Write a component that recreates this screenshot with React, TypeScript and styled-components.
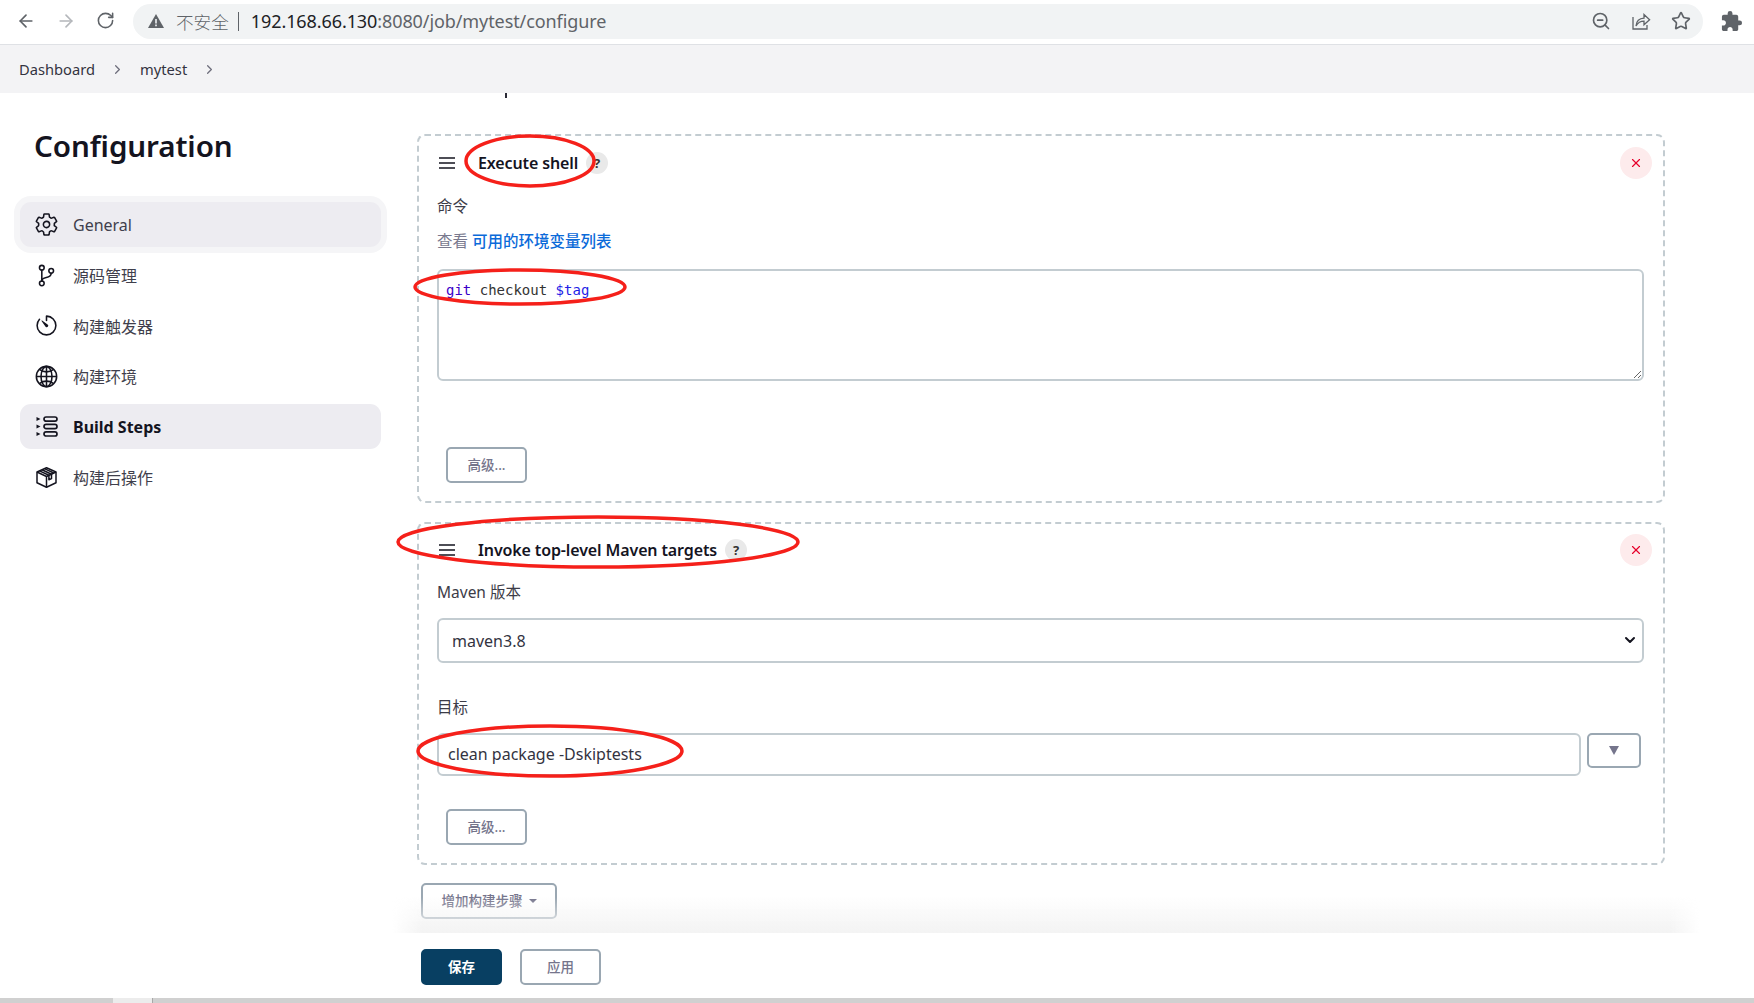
import styled, { createGlobalStyle } from "styled-components"
import { ArrowLeft, ArrowRight, RotateCw, ZoomOut, Star, ChevronRight, ChevronDown, X } from "lucide-react"
import { MdExtension } from "react-icons/md"
import { IoSettingsOutline, IoGitBranchOutline, IoTimerOutline, IoGlobeOutline } from "react-icons/io5"

const INK = "#14141f"
const FIELD_BORDER = "#c3ccd1"
const BUTTON_BORDER = "#9aa7b2"
const BUTTON_TEXT = "#75758c"

const GlobalStyle = createGlobalStyle`
	html, body {
		margin: 0;
		height: 100%;
		overflow: hidden;
		background: #fff;
	}
	body, button, input, select {
		font-family: "Noto Sans", "Noto Sans CJK SC", sans-serif;
	}
	* {
		box-sizing: border-box;
	}
`

const Page = styled.div`
	position: relative;
	display: flex;
	flex-direction: column;
	width: 1754px;
	height: 1003px;
	overflow: hidden;
	color: ${INK};
`

const BrowserBar = styled.div`
	display: flex;
	align-items: center;
	flex: none;
	height: 45px;
	padding: 0 14px 2px 16px;
	border-bottom: 1px solid #dfe1e5;
	color: #5f6368;
`

const NavIcons = styled.div`
	display: flex;
	gap: 20px;
`

const NavIcon = styled.span<{ $dim?: boolean }>`
	display: flex;
	width: 20px;
	height: 20px;
	color: ${(p) => (p.$dim ? "#b4b7bb" : "#5f6368")};
`

const AddressPill = styled.div`
	display: flex;
	align-items: center;
	flex: none;
	width: 1570px;
	height: 35px;
	margin-left: 17px;
	padding: 0 12px 0 14px;
	border-radius: 18px;
	background: #f1f3f4;
`

const InsecureLabel = styled.span`
	margin-left: 11px;
	font-size: 17.6px;
	color: #5f6368;
	font-family: "Noto Sans CJK SC", sans-serif;
	font-weight: 300;
`

const Divider = styled.span`
	width: 1px;
	height: 19px;
	margin: 0 12px 0 9px;
	background: #5f6368;
`

const Url = styled.span`
	flex: 1;
	font-size: 18px;
	letter-spacing: -0.09px;
	color: #5f6368;
	span {
		color: #202124;
	}
`

const PillIcons = styled.div`
	display: flex;
	gap: 20px;
`

const Extensions = styled.span`
	display: flex;
	margin-left: 17px;
	color: #5f6368;
`

const Breadcrumbs = styled.nav`
	display: flex;
	align-items: center;
	flex: none;
	height: 48px;
	padding-left: 19px;
	font-size: 14.7px;
	background: #f3f3f5;
	color: #33333f;
`

const Crumb = styled.span`
	display: flex;
	align-items: center;
	margin-right: 15px;
	svg {
		margin-left: 15px;
		color: #6e6e7c;
	}
`

const Workspace = styled.div`
	position: relative;
	display: flex;
	flex: 1;
	min-height: 0;
	&::after {
		content: "";
		position: absolute;
		left: 392px;
		right: 54px;
		bottom: 0;
		height: 36px;
		background: linear-gradient(transparent, #f3f3f3);
		-webkit-mask-image: linear-gradient(90deg, transparent, #000 30px, #000 calc(100% - 30px), transparent);
		pointer-events: none;
	}
`

const Sidebar = styled.aside`
	flex: none;
	width: 417px;
	padding: 31px 36px 0 20px;
`

const SidebarTitle = styled.h1`
	margin: 0 0 34px 14px;
	font-size: 29.6px;
	line-height: 44px;
	font-weight: 600;
	letter-spacing: -0.1px;
`

const SideMenu = styled.div`
	display: flex;
	flex-direction: column;
	gap: 5.6px;
`

const SideItem = styled.div<{ $active?: boolean; $focus?: boolean; $bold?: boolean }>`
	display: flex;
	align-items: center;
	gap: 14px;
	height: 45px;
	padding-left: 14px;
	border-radius: 11px;
	font-size: 16px;
	font-weight: ${(p) => (p.$bold ? 700 : 400)};
	color: ${(p) => (p.$bold ? INK : "#3f3f4c")};
	background: ${(p) => (p.$active ? "#edecf1" : "transparent")};
	box-shadow: ${(p) => (p.$focus ? "0 0 0 6px #f5f5f7" : "none")};
	svg {
		flex: none;
		width: 25px;
		height: 25px;
		color: ${INK};
	}
`

const Main = styled.main`
	flex: none;
	width: 1248px;
`

const HeadingStem = styled.div`
	width: 2px;
	height: 5px;
	margin: 0 0 36px 88px;
	background: #2a2a36;
`

const StepList = styled.div`
	display: flex;
	flex-direction: column;
	gap: 19px;
`

const StepCard = styled.section<{ $top: number }>`
	padding: ${(p) => p.$top}px 19px 18px 18px;
	border: 2px dashed ${FIELD_BORDER};
	border-radius: 8px;
`

const StepHeader = styled.div`
	display: flex;
	align-items: center;
	height: 30px;
`

const DragHandle = styled.svg`
	flex: none;
	width: 16px;
	height: 12px;
	margin: 0 23px 0 2px;
	color: ${INK};
`

const StepTitle = styled.h2`
	margin: 0;
	font-size: 16px;
	font-weight: 600;
	letter-spacing: -0.12px;
`

const HelpBadge = styled.span`
	display: flex;
	align-items: center;
	justify-content: center;
	width: 22px;
	height: 22px;
	margin-left: 8px;
	border-radius: 50%;
	font-size: 13px;
	font-weight: 700;
	background: #e9e9e9;
	color: #333;
`

const RemoveButton = styled.span`
	display: flex;
	align-items: center;
	justify-content: center;
	width: 32px;
	height: 32px;
	margin: 0 -8px 0 auto;
	border-radius: 50%;
	background: #fdebec;
	color: #e6002b;
`

const FieldLabel = styled.div<{ $top: number }>`
	margin-top: ${(p) => p.$top}px;
	font-size: 15.5px;
	line-height: 22px;
	color: #3c3c48;
`

const HintLine = styled.div`
	margin-top: 13px;
	font-size: 15.5px;
	line-height: 22px;
	color: #7a7a8f;
	a {
		color: #0b6ad9;
		font-weight: 500;
		text-decoration: none;
	}
`

const CodeArea = styled.div`
	height: 112px;
	margin-top: 17px;
	padding: 9px 7px;
	border: 2px solid ${FIELD_BORDER};
	border-radius: 6px;
	overflow: auto;
	resize: vertical;
	font-family: "DejaVu Sans Mono", monospace;
	font-size: 14px;
	line-height: 20px;
	color: #333;
`

const CodeWord = styled.span<{ $tone: string }>`
	color: ${(p) => p.$tone};
`

const PlainButton = styled.button<{ $width?: number; $height?: number }>`
	display: flex;
	align-items: center;
	justify-content: center;
	flex: none;
	width: ${(p) => p.$width ?? 81}px;
	height: ${(p) => p.$height ?? 36}px;
	padding: 0 0 2px;
	border: 2px solid ${BUTTON_BORDER};
	border-radius: 5px;
	background: #fff;
	font-size: 13.5px;
	font-weight: 500;
	color: ${BUTTON_TEXT};
`

const AdvancedButton = styled(PlainButton)<{ $top: number }>`
	margin: ${(p) => p.$top}px 0 0 9px;
`

const SelectWrap = styled.div`
	position: relative;
	margin-top: 15px;
	svg {
		position: absolute;
		top: 14px;
		right: 6px;
		color: ${INK};
		pointer-events: none;
	}
`

const VersionSelect = styled.select`
	display: block;
	width: 100%;
	height: 45px;
	padding-left: 13px;
	border: 2px solid ${FIELD_BORDER};
	border-radius: 6px;
	background: #fff;
	font-size: 16px;
	color: #33333f;
	outline: none;
	appearance: none;
`

const GoalRow = styled.div`
	display: flex;
	align-items: flex-start;
	gap: 6px;
	margin-top: 15px;
`

const GoalInput = styled.input`
	width: 1144px;
	height: 43px;
	padding: 0 9px 2px;
	border: 2px solid ${FIELD_BORDER};
	border-radius: 6px;
	font-size: 16px;
	color: #33333f;
	outline: none;
`

const Caret = styled.span<{ $half: number; $tall: number }>`
	width: 0;
	height: 0;
	margin-top: 2px;
	border-left: ${(p) => p.$half}px solid transparent;
	border-right: ${(p) => p.$half}px solid transparent;
	border-top: ${(p) => p.$tall}px solid ${BUTTON_TEXT};
`

const AddStepButton = styled(PlainButton)`
	gap: 6px;
	margin: 18px 0 0 4px;
`

const FooterBar = styled.footer`
	display: flex;
	gap: 18px;
	flex: none;
	height: 65px;
	padding: 16px 0 0 421px;
	background: #fff;
`

const SaveButton = styled(PlainButton)`
	border-color: #083f62;
	background: #083f62;
	color: #fff;
	font-weight: 700;
`

const ScrollTrack = styled.div`
	display: flex;
	flex: none;
	height: 5px;
	padding-left: 113px;
	background: #d0d0d0;
`

const ScrollThumb = styled.div`
	width: 40px;
	background: #ececec;
	border-right: 1px solid #a8a8a8;
`

const Annotations = styled.svg`
	position: absolute;
	inset: 0;
	width: 1754px;
	height: 1003px;
	pointer-events: none;
`

const WarningIcon = () => (
	<svg width='18' height='18' viewBox='0 0 18 18'>
		<path d='M9 2 17 16H1Z' fill='#5f6368' />
		<path d='M8.2 7h1.6v4.6H8.2ZM8.2 12.6h1.6v1.6H8.2Z' fill='#f1f3f4' />
	</svg>
)

const ShareIcon = () => (
	<svg width='20' height='20' viewBox='0 0 20 20' fill='none' stroke='#5f6368' strokeWidth='1.3'>
		<path d='M2 6v12h14v-4' />
		<path d='M5 15c.4-4.6 3.4-7.6 8-7.8V3.6l5.6 5.2-5.6 5v-3.6c-3.4 0-6 1.400-8 4.800Z' />
	</svg>
)

const BuildStepsIcon = () => (
	<svg viewBox='-1.500 -1.500 25 25' fill='none' stroke='currentColor' strokeWidth='1.700'>
		<rect x='8.500' y='1.500' width='13' height='4.200' rx='2.100' />
		<rect x='8.500' y='8.900' width='13' height='4.200' rx='2.100' />
		<rect x='8.500' y='16.300' width='13' height='4.200' rx='2.100' />
		<path d='M1 1.600 5 3.600 1 5.600ZM1 9 5 11 1 13ZM1 16.400 5 18.400 1 20.400Z' fill='currentColor' stroke='none' />
	</svg>
)

const PackageIcon = () => (
	<svg viewBox='-1.500 -1.500 25 25' fill='none' stroke='currentColor' strokeWidth='1.500' strokeLinejoin='round'>
		<path d='M11 1.200 20.500 5.500v10.800L11 20.800 1.500 16.300V5.500Z' />
		<path d='M1.500 5.500 11 10l9.500-4.500M11 10v10.800' />
		<path d='M6.500 3.200 16 7.700v4.400l-2.600 1.200V8.800L4 4.400' />
		<path d='M9 2.100 18.200 6.500' />
	</svg>
)

const HandleIcon = () => (
	<DragHandle viewBox='0 0 16 12' fill='none' stroke='currentColor' strokeWidth='1.700'>
		<path d='M0 1h16M0 6h16M0 11h16' />
	</DragHandle>
)

const menu = [
	{ label: "General", icon: <IoSettingsOutline />, active: true, focus: true },
	{ label: "源码管理", icon: <IoGitBranchOutline /> },
	{ label: "构建触发器", icon: <IoTimerOutline /> },
	{ label: "构建环境", icon: <IoGlobeOutline /> },
	{ label: "Build Steps", icon: <BuildStepsIcon />, active: true, bold: true },
	{ label: "构建后操作", icon: <PackageIcon /> },
]

const App = () => {
	return (
		<Page>
			<GlobalStyle />
			<BrowserBar>
				<NavIcons>
					<NavIcon>
						<ArrowLeft size={20} />
					</NavIcon>
					<NavIcon $dim>
						<ArrowRight size={20} />
					</NavIcon>
					<NavIcon>
						<RotateCw size={19} />
					</NavIcon>
				</NavIcons>
				<AddressPill>
					<WarningIcon />
					<InsecureLabel>不安全</InsecureLabel>
					<Divider />
					<Url>
						<span>192.168.66.130</span>:8080/job/mytest/configure
					</Url>
					<PillIcons>
						<NavIcon>
							<ZoomOut size={20} />
						</NavIcon>
						<NavIcon>
							<ShareIcon />
						</NavIcon>
						<NavIcon>
							<Star size={20} />
						</NavIcon>
					</PillIcons>
				</AddressPill>
				<Extensions>
					<MdExtension size={23} />
				</Extensions>
			</BrowserBar>
			<Breadcrumbs>
				<Crumb>
					Dashboard
					<ChevronRight size={15} />
				</Crumb>
				<Crumb>
					mytest
					<ChevronRight size={15} />
				</Crumb>
			</Breadcrumbs>
			<Workspace>
				<Sidebar>
					<SidebarTitle>Configuration</SidebarTitle>
					<SideMenu>
						{menu.map((m) => (
							<SideItem key={m.label} $active={m.active} $focus={m.focus} $bold={m.bold}>
								{m.icon}
								{m.label}
							</SideItem>
						))}
					</SideMenu>
				</Sidebar>
				<Main>
					<HeadingStem />
					<StepList>
						<StepCard $top={12}>
							<StepHeader>
								<HandleIcon />
								<StepTitle>Execute shell</StepTitle>
								<HelpBadge>?</HelpBadge>
								<RemoveButton>
									<X size={14} />
								</RemoveButton>
							</StepHeader>
							<FieldLabel $top={17}>命令</FieldLabel>
							<HintLine>
								查看 <a href='#'>可用的环境变量列表</a>
							</HintLine>
							<CodeArea>
								<CodeWord $tone='#3a00c8'>git</CodeWord> checkout <CodeWord $tone='#1f1fe6'>$tag</CodeWord>
							</CodeArea>
							<AdvancedButton $top={66}>高级...</AdvancedButton>
						</StepCard>
						<StepCard $top={11}>
							<StepHeader>
								<HandleIcon />
								<StepTitle>Invoke top-level Maven targets</StepTitle>
								<HelpBadge>?</HelpBadge>
								<RemoveButton>
									<X size={14} />
								</RemoveButton>
							</StepHeader>
							<FieldLabel $top={16}>Maven 版本</FieldLabel>
							<SelectWrap>
								<VersionSelect defaultValue='maven3.8'>
									<option>maven3.8</option>
								</VersionSelect>
								<ChevronDown size={16} strokeWidth={3} />
							</SelectWrap>
							<FieldLabel $top={33}>目标</FieldLabel>
							<GoalRow>
								<GoalInput defaultValue='clean package -Dskiptests' />
								<PlainButton $width={54} $height={35}>
									<Caret $half={5} $tall={9} />
								</PlainButton>
							</GoalRow>
							<AdvancedButton $top={33}>高级...</AdvancedButton>
						</StepCard>
					</StepList>
					<AddStepButton $width={136}>
						增加构建步骤
						<Caret $half={4} $tall={4} />
					</AddStepButton>
				</Main>
			</Workspace>
			<FooterBar>
				<SaveButton>保存</SaveButton>
				<PlainButton $width={81}>应用</PlainButton>
			</FooterBar>
			<ScrollTrack>
				<ScrollThumb />
			</ScrollTrack>
			<Annotations viewBox='0 0 1754 1003' fill='none' stroke='#f5201a' strokeWidth='3.500'>
				<ellipse cx='530' cy='161' rx='64' ry='25' />
				<ellipse cx='520' cy='287' rx='105' ry='17' />
				<ellipse cx='598' cy='542' rx='200' ry='25' />
				<ellipse cx='550' cy='751' rx='132' ry='25' />
			</Annotations>
		</Page>
	)
}

export default App
